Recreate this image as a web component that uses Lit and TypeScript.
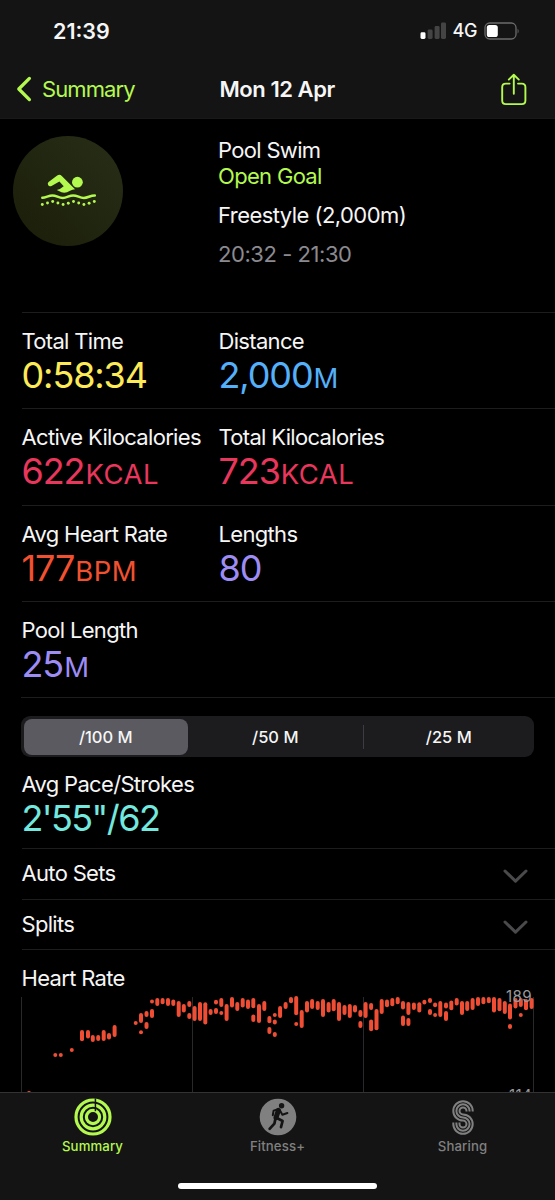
import { LitElement, html, svg, css } from 'lit';
import { customElement } from 'lit/decorators.js';

type Metric = { label: string; value: string; unit?: string; tone: string };

const ROWS: Metric[][] = [
  [
    { label: 'Total Time', value: '0:58:34', tone: 'yellow' },
    { label: 'Distance', value: '2,000', unit: 'M', tone: 'blue' },
  ],
  [
    { label: 'Active Kilocalories', value: '622', unit: 'KCAL', tone: 'pink' },
    { label: 'Total Kilocalories', value: '723', unit: 'KCAL', tone: 'pink' },
  ],
  [
    { label: 'Avg Heart Rate', value: '177', unit: 'BPM', tone: 'red' },
    { label: 'Lengths', value: '80', tone: 'purple' },
  ],
  [{ label: 'Pool Length', value: '25', unit: 'M', tone: 'purple' }],
];

// Heart-rate samples: [x, top, bottom] in chart units.
const BEATS: number[][] = [
  [29, 1091, 1095],
  [55.3, 1053, 1057], [60.8, 1053, 1057], [71.8, 1048, 1052], [82, 1030, 1041.3], [88, 1030, 1038.5],
  [92.8, 1035, 1042], [98.2, 1035, 1041], [103.7, 1030, 1041], [109, 1033, 1039.5], [114.6, 1025, 1037],
  [135.7, 1021, 1025], [141, 1013, 1023], [141, 1030.3, 1034.3], [146.5, 1011, 1017], [146.5, 1022, 1029],
  [152, 1009, 1018], [152, 999.4, 1003.4], [157.3, 998, 1006], [162.6, 998, 1004.3], [168, 998, 1006],
  [173.3, 999.5, 1006], [178.7, 1001, 1017], [183.8, 1004, 1012.5], [189.3, 1001, 1007], [189.3, 1013, 1019],
  [194.6, 1006, 1021], [200, 1002, 1021], [205.3, 1002.3, 1024.6], [210.6, 1009, 1015], [216, 999.8, 1004.5],
  [216, 1008, 1014], [221.3, 998, 1007], [221.3, 1011, 1015], [226.6, 1004, 1021], [232, 997, 1007.5],
  [237.3, 1002, 1011], [242.7, 998, 1007.5], [248, 999.5, 1009], [253.3, 998, 1008.3], [253.3, 1014.5, 1022],
  [259, 1004, 1023], [264.3, 1001, 1011], [269.4, 1016, 1023.3], [269.4, 1027, 1034], [274.8, 1013, 1017],
  [274.8, 1019.6, 1024.6], [274.8, 1032, 1037], [280.1, 1006, 1018], [285.6, 1002, 1009], [291, 997, 1003.3],
  [296.2, 996, 1015.2], [296.2, 1022, 1026], [301.7, 1010, 1028], [307, 1001, 1012.5], [312.1, 999, 1009],
  [317.7, 1001, 1010], [323, 999, 1017], [328.6, 1002, 1012.5], [333.7, 999, 1011.3], [339, 1002, 1021],
  [344.5, 1005, 1015], [349.8, 1004, 1018], [355, 1005, 1012.5], [360.4, 1010, 1017], [360.4, 1021, 1028],
  [365.6, 1002, 1018], [371.1, 1003, 1010], [371.1, 1019.5, 1031.3], [376.5, 1009, 1030.3], [381.7, 999, 1014],
  [387, 999.5, 1007.3], [392.3, 998, 1006.3], [397.7, 997, 1004.3], [403, 1001, 1009.5], [403, 1015.5, 1026],
  [408.4, 1002, 1015], [408.4, 1018, 1026], [413.9, 1002.5, 1010], [419.3, 1002.3, 1012.5], [424.4, 999.7, 1004.5],
  [430, 998, 1003], [430, 1009, 1015], [435.1, 1002.6, 1007.3], [435.1, 1013, 1017], [440.3, 1001, 1017],
  [446, 1002.5, 1008.5], [446, 1011, 1021], [451.3, 1000.5, 1010.3], [456.7, 998, 1005.5], [462, 1001, 1015],
  [467.2, 1001, 1011], [472.6, 998, 1010], [478, 997, 1006], [483.4, 997, 1004.3], [488.8, 997, 1003.3],
  [494, 997, 1012.6], [499.5, 998, 1011.3], [504.8, 1001, 1014], [510, 1003.5, 1019.5], [510, 1024, 1029],
  [515.5, 998, 1008.5], [520.8, 998, 1007], [520.8, 1013, 1017], [526, 999, 1010.3], [531.6, 998, 1009],
];

const SPLASH = [204.5, 203, 201.5, 203, 204.5, 203.2, 201.5, 203, 204.5, 203.2, 201.5];

@customElement('app-root')
export class AppRoot extends LitElement {
  static styles = css`
    :host {
      display: flex;
      flex-direction: column;
      width: 555px;
      height: 1200px;
      overflow: hidden;
      background: #000;
      color: #f6f6f6;
      font-family: Inter, 'Liberation Sans', sans-serif;
      font-size: 22px;
      line-height: 26px;
      letter-spacing: -0.68px;
    }
    * { box-sizing: border-box; }
    svg { display: block; flex: none; }
    .top { height: 119px; background: #141414; flex: none; border-bottom: 1px solid #191919; }
    .status { display: flex; align-items: center; height: 61.5px; padding: 1px 35px 0 53px; }
    .clock { font-size: 21.5px; font-weight: 600; flex: 1; letter-spacing: 0; }
    .net { font-size: 18px; font-weight: 500; margin: 0 7px 0 6.5px; letter-spacing: -0.4px; }
    .nav { display: grid; grid-template-columns: 17px 183px 1fr auto; height: 55px; align-items: center; padding: 0 28px 0 16px; }
    .back { color: #b4f94f; padding-left: 9px; letter-spacing: -0.9px; }
    .title { font-weight: 600; padding-left: 3.5px; letter-spacing: -0.45px; }
    .hero { height: 193px; display: grid; grid-template-columns: 205px 1fr; padding: 17px 0 0 13px; flex: none; }
    .lines { display: flex; flex-direction: column; padding-top: 0.8px; }
    .goal { color: #b4f94f; }
    .stroke { margin-top: 13px; letter-spacing: -0.55px; }
    .when { color: #8b8a90; margin-top: 13.2px; letter-spacing: -0.45px; }
    .row {
      display: grid;
      grid-template-columns: 197px 1fr;
      height: 96.35px;
      margin-left: 21.5px;
      padding-top: 15px;
      border-top: 1px solid #1d1d1f;
      flex: none;
    }
    .label { white-space: nowrap; }
    .value { font-size: 36px; line-height: 42px; font-weight: 400; white-space: nowrap; letter-spacing: -1.1px; }
    .unit { font-size: 27.5px; letter-spacing: 0.5px; margin-left: 1px; }
    .yellow { color: #fdea57; }
    .blue { color: #54b0f9; }
    .pink { color: #e9365c; }
    .red { color: #f2512f; }
    .purple { color: #9e8cf5; }
    .teal { color: #73e8de; letter-spacing: -1.6px; }
    .segwrap { border-top: 1px solid #1d1d1f; margin-left: 21px; padding-top: 18px; flex: none; }
    .seg {
      display: flex;
      width: 513px;
      height: 41px;
      border-radius: 9px;
      background: #1c1c1f;
      padding: 2.5px 0 2.5px 2.5px;
      font-size: 16.5px;
      font-weight: 500;
      letter-spacing: 0;
    }
    .tab { flex: 1; display: flex; align-items: center; justify-content: center; }
    .on { background: #5b5a60; border-radius: 8px; flex: 0 0 164.5px; }
    .mid { flex: 0 0 174.5px; }
    .sep { width: 1px; height: 24px; align-self: center; background: #3d3d41; }
    .pace { margin-left: 21.5px; height: 91px; padding-top: 14px; flex: none; }
    .fold {
      margin-left: 21.5px;
      height: 50.5px;
      border-top: 1px solid #1d1d1f;
      display: flex;
      justify-content: space-between;
      padding: 11px 27px 0 0;
      flex: none;
    }
    .chev { margin-top: 8px; }
    .heart { border-top: 1px solid #1d1d1f; margin-left: 21.5px; padding-top: 15px; height: 30.6px; flex: none; }
    .tabs {
      flex: none;
      height: 108px;
      background: #141414;
      border-top: 1px solid #333;
      display: flex;
      flex-direction: column;
      align-items: center;
    }
    .items { display: flex; width: 100%; height: 90px; }
    .item {
      flex: 1;
      display: flex;
      flex-direction: column;
      align-items: center;
      padding-top: 4px;
      color: #808080;
      font-size: 13.2px;
      line-height: 18px;
      font-weight: 500;
      letter-spacing: 0.12px;
    }
    .item svg { margin-bottom: 0.5px; }
    .active { color: #b4f94f; }
    .home { width: 199px; height: 6.5px; border-radius: 4px; background: #fff; }
    .axis { font-size: 15.2px; letter-spacing: 0.3px; }
  `;

  private metric(m: Metric) {
    return html`<div>
      <div class="label">${m.label}</div>
      <div class="value ${m.tone}">${m.value}${m.unit ? html`<span class="unit">${m.unit}</span>` : ''}</div>
    </div>`;
  }

  private fold(name: string) {
    return html`<div class="fold">
      <span>${name}</span>
      <svg class="chev" width="25" height="16" viewBox="0 0 25 16" fill="none">
        <path d="M2 3 L12.5 13.2 L23 3" stroke="#4a4a4c" stroke-width="3" stroke-linecap="round" stroke-linejoin="round" />
      </svg>
    </div>`;
  }

  render() {
    return html`
      <header class="top">
        <div class="status">
          <span class="clock">21:39</span>
          <svg width="26" height="18" viewBox="0 0 26 18">
            <rect x="0.5" y="10.3" width="5" height="6.7" rx="1.4" fill="#fff" />
            <rect x="7.6" y="7.5" width="5" height="9.5" rx="1.4" fill="#444" />
            <rect x="14.6" y="4" width="5" height="13" rx="1.4" fill="#444" />
            <rect x="21" y="0.4" width="5" height="16.6" rx="1.4" fill="#444" />
          </svg>
          <span class="net">4G</span>
          <svg width="36" height="18" viewBox="0 0 36 18">
            <rect x="1" y="1" width="31" height="16" rx="4.7" fill="none" stroke="#6b6b6b" stroke-width="1.3" />
            <rect x="2.8" y="2.9" width="11" height="12.2" rx="2.6" fill="#fff" />
            <path d="M33.6 6.4 Q35.6 9 33.6 11.6Z" fill="#6b6b6b" />
          </svg>
        </div>
        <div class="nav">
          <svg width="17" height="26" viewBox="0 0 17 26" fill="none">
            <path d="M13.4 2.4 L2.8 13 L13.4 23.6" stroke="#b4f94f" stroke-width="3.3" stroke-linecap="round" stroke-linejoin="round" />
          </svg>
          <span class="back">Summary</span>
          <span class="title">Mon 12 Apr</span>
          <svg width="26" height="33" viewBox="0 0 26 33" fill="none" stroke="#b4f94f" stroke-width="1.9" stroke-linecap="round" stroke-linejoin="round">
            <path d="M8.6 10.6 H4.8 Q1.2 10.6 1.2 14.2 V27.5 Q1.2 31.1 4.8 31.1 H20.8 Q24.4 31.1 24.4 27.5 V14.2 Q24.4 10.6 20.8 10.6 H17" />
            <path d="M12.8 20.8 V2 M7.8 6.6 L12.8 1.7 L17.8 6.6" />
          </svg>
        </div>
      </header>

      <section class="hero">
        <svg width="110" height="110" viewBox="13 136 110 110">
          <defs>
            <linearGradient id="disc" x1="0" y1="1" x2="1" y2="0">
              <stop offset="0" stop-color="#1b1e08" />
              <stop offset="1" stop-color="#272e18" />
            </linearGradient>
          </defs>
          <circle cx="68" cy="191" r="55" fill="url(#disc)" />
          <g fill="#b4f94f">
            <circle cx="77.4" cy="182.2" r="5.4" />
            <path d="M48.6 182 L57.2 175.6 Q59.6 173.8 61.8 176 L75 189.2 Q72.6 189.2 70 190.8 Q65.5 193.6 61.5 192.2 L56.8 190.1 Q60.8 189 63.7 186.3 L59.4 181.6 L51.5 185.9 Q49.2 186.8 48.1 185 Q47.2 183.2 48.6 182Z" />
            ${SPLASH.map((y, i) => svg`<circle cx=${42.3 + i * 5.2} cy=${y} r="1.45" />`)}
          </g>
          <path
            d="M42.3 197.8 C46 197.8 48.5 195.4 52.4 195.4 C56.5 195.4 58.5 198 62.8 198 C67 198 69 195.4 73.2 195.4 C77.5 195.4 79.5 198 83.8 198 C88 198 90 195.4 94.8 195.4"
            fill="none" stroke="#b4f94f" stroke-width="2.5" stroke-linecap="round" />
        </svg>
        <div class="lines">
          <span>Pool Swim</span>
          <span class="goal">Open Goal</span>
          <span class="stroke">Freestyle (2,000m)</span>
          <span class="when">20:32 - 21:30</span>
        </div>
      </section>

      ${ROWS.map((r) => html`<section class="row">${r.map((m) => this.metric(m))}</section>`)}

      <div class="segwrap">
        <div class="seg">
          <span class="tab on">/100 M</span>
          <span class="tab mid">/50 M</span>
          <i class="sep"></i>
          <span class="tab">/25 M</span>
        </div>
      </div>

      <section class="pace">
        <div class="label">Avg Pace/Strokes</div>
        <div class="value teal">2'55"/62</div>
      </section>
      ${this.fold('Auto Sets')} ${this.fold('Splits')}
      <div class="heart">Heart Rate</div>
      <svg width="555" height="112" viewBox="0 980 555 112">
        ${[21.5, 192.5, 363.5, 533.5].map((x) => svg`<path d="M${x} 997 V1092" stroke="#29292b" stroke-width="1" />`)}
        <g stroke="#ef4e35" stroke-width="4" stroke-linecap="round">
          ${BEATS.map(([x, a, b]) => svg`<path d="M${x} ${a + 2} V${Math.max(b - 2, a + 2.01)}" />`)}
        </g>
        <g class="axis" fill="#98989c" text-anchor="end">
          <text x="532" y="1002.3">189</text>
          <text x="532" y="1101">114</text>
        </g>
      </svg>

      <nav class="tabs">
        <div class="items">
          <div class="item active">
            <svg width="40" height="40" viewBox="0 0 40 40" fill="none" stroke="#b4f94f">
              <circle cx="20" cy="20" r="17" stroke-width="3.2" />
              <circle cx="20" cy="20" r="11.8" stroke-width="3.2" />
              <circle cx="20" cy="20" r="6.6" stroke-width="3.2" />
              <path d="M22.4 1.5 V14.2" stroke="#141414" stroke-width="1.5" />
            </svg>
            Summary
          </div>
          <div class="item">
            <svg width="40" height="40" viewBox="0 0 40 40">
              <circle cx="20" cy="20" r="18.3" fill="#808080" />
              <circle cx="23.6" cy="8.7" r="2.7" fill="#141414" />
              <g fill="none" stroke="#141414" stroke-linecap="round" stroke-linejoin="round">
                <path d="M20.4 13.4 L18 20.6" stroke-width="5" />
                <path d="M19.4 12.5 L15.6 13.6 L14.8 18.2" stroke-width="2" />
                <path d="M22 13.6 L24.4 17.8 L29.4 16" stroke-width="2" />
                <path d="M19.4 21.2 L24.6 24 L23 30.2" stroke-width="2.7" />
                <path d="M17.4 21.8 L16.4 26.6 L11.6 31.8" stroke-width="2.7" />
              </g>
            </svg>
            Fitness+
          </div>
          <div class="item">
            <svg width="40" height="40" viewBox="442 1097 40 40" fill="none" stroke="#808080" stroke-width="2">
              ${[9.7, 6.6, 3.5].map((r) => {
                const q = 13.2 - r;
                return svg`<path d="M${462 + r} 1111.4 V1110.9 A${r} ${r} 0 1 0 462 ${1110.9 + r} A${q} ${q} 0 1 1 ${462 - q} 1124.1 V1122.5" />`;
              })}
            </svg>
            Sharing
          </div>
        </div>
        <div class="home"></div>
      </nav>
    `;
  }
}
